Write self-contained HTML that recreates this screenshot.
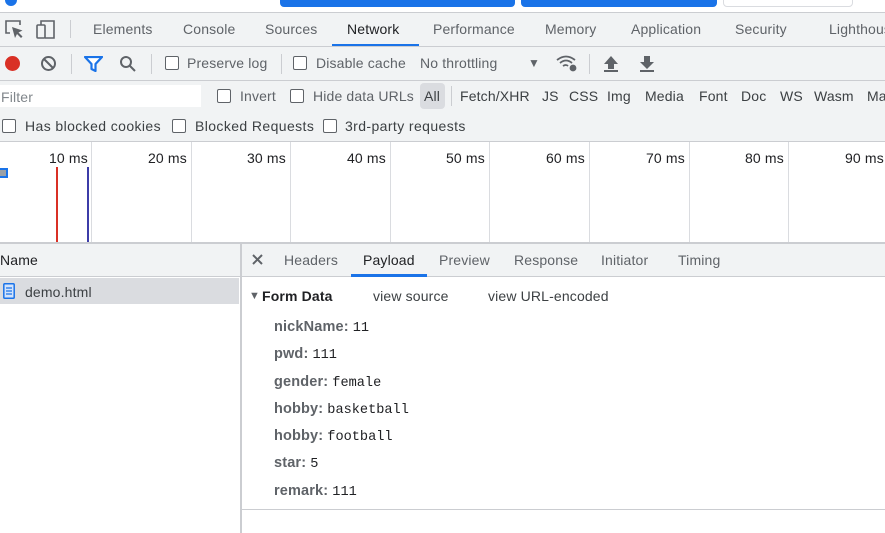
<!DOCTYPE html>
<html><head><meta charset="utf-8"><style>
*{margin:0;padding:0;box-sizing:border-box}
body{width:885px;height:533px;overflow:hidden;background:#fff;font-family:"Liberation Sans",sans-serif;font-size:14px;color:#202124;position:relative;letter-spacing:0.15px}
.a{position:absolute;white-space:nowrap}
.g{color:#5f6368}
.cb{position:absolute;width:14px;height:14px;border:1.5px solid #5f6368;border-radius:2px;background:#fff}
.vl{position:absolute;width:1px;background:#dadce0}
.mono{font-family:"Liberation Mono",monospace;font-size:13.6px;color:#202124;letter-spacing:0}
.k{font-weight:bold;color:#5f6368;font-size:14.5px}
</style></head><body>
<div class="a" style="left:5px;top:-6px;width:12px;height:12px;border-radius:6px;background:#1a73e8"></div>
<div class="a" style="left:280px;top:-4px;width:235px;height:11px;border-radius:4px;background:#1a73e8"></div>
<div class="a" style="left:521px;top:-4px;width:196px;height:11px;border-radius:4px;background:#1a73e8"></div>
<div class="a" style="left:723px;top:-4px;width:130px;height:11px;border-radius:4px;border:1px solid #dadce0;background:#fff"></div>
<div class="a" style="left:0;top:12px;width:885px;height:130px;background:#f1f3f4;border-top:1px solid #cbcdd1"></div>
<div class="a" style="left:0;top:46px;width:885px;height:1px;background:#cbcdd1"></div>
<div class="a" style="left:0;top:80px;width:885px;height:1px;background:#cbcdd1"></div>
<div class="a" style="left:0;top:141px;width:885px;height:1px;background:#cbcdd1"></div>
<svg class="a" style="left:4px;top:19px" width="56" height="22" viewBox="0 0 56 22" fill="none" stroke="#5f6368" stroke-width="1.6">
<path d="M6 14H2V2h14v4"/><path d="M8 8l3 11 2-4 4 4 1.5-1.5-4-4 4-2z" fill="#5f6368" stroke="none"/>
<rect x="33" y="6" width="8" height="13" rx="1"/><path d="M37 6V2h13v17H41"/>
</svg>
<div class="vl" style="left:70px;top:20px;height:18px;background:#cbcdd1"></div>
<div class="a g" style="left:93px;top:21px">Elements</div>
<div class="a g" style="left:183px;top:21px">Console</div>
<div class="a g" style="left:265px;top:21px">Sources</div>
<div class="a" style="left:347px;top:21px">Network</div>
<div class="a" style="left:332px;top:44px;width:87px;height:2px;background:#1a73e8"></div>
<div class="a g" style="left:433px;top:21px">Performance</div>
<div class="a g" style="left:545px;top:21px">Memory</div>
<div class="a g" style="left:631px;top:21px">Application</div>
<div class="a g" style="left:735px;top:21px">Security</div>
<div class="a g" style="left:829px;top:21px">Lighthouse</div>
<div class="a" style="left:5px;top:56px;width:15px;height:15px;border-radius:8px;background:#d93025"></div>
<svg class="a" style="left:40px;top:55px" width="17" height="17" viewBox="0 0 17 17" fill="none" stroke="#5f6368" stroke-width="2"><circle cx="8.5" cy="8.5" r="6.5"/><path d="M4 4l9 9"/></svg>
<div class="vl" style="left:71px;top:54px;height:20px;background:#cbcdd1"></div>
<svg class="a" style="left:84px;top:56px" width="19" height="16" viewBox="0 0 19 16"><path d="M1 1h17l-6.5 7v7l-4-2V8z" fill="#fff" stroke="#1a73e8" stroke-width="2.2" stroke-linejoin="round"/></svg>
<svg class="a" style="left:119px;top:55px" width="18" height="18" viewBox="0 0 18 18" fill="none" stroke="#5f6368" stroke-width="2"><circle cx="7" cy="7" r="5"/><path d="M11 11l5 5"/></svg>
<div class="vl" style="left:151px;top:54px;height:20px;background:#cbcdd1"></div>
<div class="cb" style="left:165px;top:56px"></div><div class="a g" style="left:187px;top:55px">Preserve log</div>
<div class="vl" style="left:281px;top:54px;height:20px;background:#cbcdd1"></div>
<div class="cb" style="left:293px;top:56px"></div><div class="a g" style="left:316px;top:55px">Disable cache</div>
<div class="a g" style="left:420px;top:55px">No throttling</div>
<div class="a g" style="left:528px;top:56px;font-size:12px">▼</div>
<svg class="a" style="left:556px;top:55px" width="22" height="17" viewBox="0 0 22 17" fill="none" stroke="#5f6368" stroke-width="1.8"><path d="M1 5q9-7 18 0M4 8q6-5 12 0M7 11q3-2 5 0"/><circle cx="17" cy="13" r="2.5" fill="#5f6368"/></svg>
<div class="vl" style="left:589px;top:54px;height:20px;background:#cbcdd1"></div>
<svg class="a" style="left:603px;top:55px" width="16" height="17" viewBox="0 0 16 17" fill="#5f6368"><path d="M8 1l7 8H11v5H5V9H1z"/><rect x="1" y="15" width="14" height="2"/></svg>
<svg class="a" style="left:639px;top:55px" width="16" height="17" viewBox="0 0 16 17" fill="#5f6368"><path d="M8 14l7-7H11V1H5v6H1z"/><rect x="1" y="15" width="14" height="2"/></svg>
<div class="a" style="left:0;top:85px;width:201px;height:22px;background:#fff"></div>
<div class="a" style="left:1px;top:89px;color:#80868b;font-size:14px">Filter</div>
<div class="cb" style="left:217px;top:89px"></div><div class="a g" style="left:240px;top:88px">Invert</div>
<div class="cb" style="left:290px;top:89px"></div><div class="a g" style="left:313px;top:88px">Hide data URLs</div>
<div class="a" style="left:420px;top:83px;width:25px;height:26px;border-radius:4px;background:#dadce0"></div>
<div class="a" style="left:424px;top:88px;color:#3c4043">All</div>
<div class="vl" style="left:451px;top:86px;height:20px;background:#cbcdd1"></div>
<div class="a" style="left:460px;top:88px;color:#3c4043">Fetch/XHR</div>
<div class="a" style="left:542px;top:88px;color:#3c4043">JS</div>
<div class="a" style="left:569px;top:88px;color:#3c4043">CSS</div>
<div class="a" style="left:607px;top:88px;color:#3c4043">Img</div>
<div class="a" style="left:645px;top:88px;color:#3c4043">Media</div>
<div class="a" style="left:699px;top:88px;color:#3c4043">Font</div>
<div class="a" style="left:741px;top:88px;color:#3c4043">Doc</div>
<div class="a" style="left:780px;top:88px;color:#3c4043">WS</div>
<div class="a" style="left:814px;top:88px;color:#3c4043">Wasm</div>
<div class="a" style="left:867px;top:88px;color:#3c4043">Manifest</div>
<div class="cb" style="left:2px;top:119px"></div><div class="a" style="left:25px;top:118px;color:#3c4043;letter-spacing:0.4px">Has blocked cookies</div>
<div class="cb" style="left:172px;top:119px"></div><div class="a" style="left:195px;top:118px;color:#3c4043;letter-spacing:0.4px">Blocked Requests</div>
<div class="cb" style="left:323px;top:119px"></div><div class="a" style="left:345px;top:118px;color:#3c4043;letter-spacing:0.4px">3rd-party requests</div>
<div class="vl" style="left:91px;top:142px;height:100px"></div>
<div class="vl" style="left:191px;top:142px;height:100px"></div>
<div class="vl" style="left:290px;top:142px;height:100px"></div>
<div class="vl" style="left:390px;top:142px;height:100px"></div>
<div class="vl" style="left:489px;top:142px;height:100px"></div>
<div class="vl" style="left:589px;top:142px;height:100px"></div>
<div class="vl" style="left:689px;top:142px;height:100px"></div>
<div class="vl" style="left:788px;top:142px;height:100px"></div>
<div class="a" style="left:49px;top:150px">10 ms</div>
<div class="a" style="left:148px;top:150px">20 ms</div>
<div class="a" style="left:247px;top:150px">30 ms</div>
<div class="a" style="left:347px;top:150px">40 ms</div>
<div class="a" style="left:446px;top:150px">50 ms</div>
<div class="a" style="left:546px;top:150px">60 ms</div>
<div class="a" style="left:646px;top:150px">70 ms</div>
<div class="a" style="left:745px;top:150px">80 ms</div>
<div class="a" style="left:845px;top:150px">90 ms</div>
<div class="a" style="left:0;top:168px;width:8px;height:10px;background:#1a73e8"></div>
<div class="a" style="left:0;top:170px;width:6px;height:6px;background:#9aa0a6"></div>
<div class="a" style="left:56px;top:167px;width:1.5px;height:75px;background:#d93025"></div>
<div class="a" style="left:87px;top:167px;width:1.5px;height:75px;background:#3c3ca8"></div>
<div class="a" style="left:0;top:242px;width:885px;height:2px;background:#cbcdd1"></div>
<div class="a" style="left:0;top:244px;width:240px;height:33px;background:#f1f3f4;border-bottom:1px solid #cbcdd1"></div>
<div class="a" style="left:0;top:252px">Name</div>
<div class="a" style="left:0;top:278px;width:239px;height:26px;background:#dadce0"></div>
<svg class="a" style="left:3px;top:283px" width="12" height="16" viewBox="0 0 12 16"><rect x="0.8" y="0.8" width="10.4" height="14.4" rx="1" fill="#d2e3fc" stroke="#1a73e8" stroke-width="1.5"/><path d="M3 5h6M3 8h6M3 11h6" stroke="#1a73e8" stroke-width="1.2"/></svg>
<div class="a" style="left:25px;top:284px;color:#3c4043">demo.html</div>
<div class="a" style="left:240px;top:244px;width:2px;height:289px;background:#cbcdd1"></div>
<div class="a" style="left:242px;top:244px;width:643px;height:33px;background:#f1f3f4;border-bottom:1px solid #cbcdd1"></div>
<svg class="a" style="left:252px;top:254px" width="11" height="11" viewBox="0 0 11 11" stroke="#5f6368" stroke-width="2"><path d="M1 1l9 9M10 1l-9 9"/></svg>
<div class="a g" style="left:284px;top:252px">Headers</div>
<div class="a" style="left:363px;top:252px">Payload</div>
<div class="a" style="left:351px;top:274px;width:76px;height:3px;background:#1a73e8"></div>
<div class="a g" style="left:439px;top:252px">Preview</div>
<div class="a g" style="left:514px;top:252px">Response</div>
<div class="a g" style="left:601px;top:252px">Initiator</div>
<div class="a g" style="left:678px;top:252px">Timing</div>
<div class="a g" style="left:249px;top:290px;font-size:11px">▼</div>
<div class="a" style="left:262px;top:288px;font-weight:bold">Form Data</div>
<div class="a" style="left:373px;top:288px;color:#3c4043">view source</div>
<div class="a" style="left:488px;top:288px;color:#3c4043">view URL-encoded</div>
<div class="a" style="left:274px;top:318px"><span class="k">nickName:</span> <span class="mono">11</span></div>
<div class="a" style="left:274px;top:345px"><span class="k">pwd:</span> <span class="mono">111</span></div>
<div class="a" style="left:274px;top:373px"><span class="k">gender:</span> <span class="mono">female</span></div>
<div class="a" style="left:274px;top:400px"><span class="k">hobby:</span> <span class="mono">basketball</span></div>
<div class="a" style="left:274px;top:427px"><span class="k">hobby:</span> <span class="mono">football</span></div>
<div class="a" style="left:274px;top:454px"><span class="k">star:</span> <span class="mono">5</span></div>
<div class="a" style="left:274px;top:482px"><span class="k">remark:</span> <span class="mono">111</span></div>
<div class="a" style="left:242px;top:509px;width:643px;height:1px;background:#cbcdd1"></div>
</body></html>
